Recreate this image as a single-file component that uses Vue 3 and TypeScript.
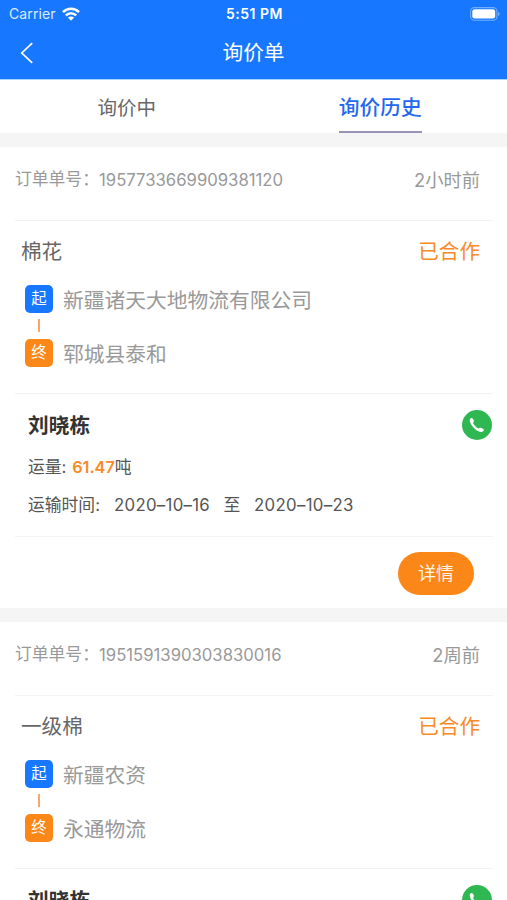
<script setup lang="ts">
interface Inquiry {
  id: string
  ago: string
  goods: string
  status: string
  from: string
  to: string
  contact: string
  amount: string
  start: string
  end: string
}

const inquiries: Inquiry[] = [
  {
    id: '1957733669909381120',
    ago: '2小时前',
    goods: '棉花',
    status: '已合作',
    from: '新疆诸天大地物流有限公司',
    to: '郓城县泰和',
    contact: '刘晓栋',
    amount: '61.47',
    start: '2020–10–16',
    end: '2020–10–23',
  },
  {
    id: '1951591390303830016',
    ago: '2周前',
    goods: '一级棉',
    status: '已合作',
    from: '新疆农资',
    to: '永通物流',
    contact: '刘晓栋',
    amount: '',
    start: '',
    end: '',
  },
]
</script>

<template>
  <div class="screen" lang="zh-CN">
    <header class="top">
      <div class="status-bar">
        <div class="carrier">
          <span>Carrier</span>
          <svg class="wifi" width="18" height="14" viewBox="0 0 18 14">
            <g fill="none" stroke="#fff" stroke-width="2.5">
              <path d="M1 5.2C5.5.7 12.5.7 17 5.2" />
              <path d="M3.8 8.3c3-2.9 7.4-2.9 10.4 0" />
            </g>
            <path d="M9 13.7 5.9 10.6c1.8-1.6 4.4-1.6 6.2 0z" fill="#fff" />
          </svg>
        </div>
        <span class="clock">5:51 PM</span>
        <div class="power">
          <svg width="30" height="14" viewBox="0 0 30 14">
            <rect x=".6" y=".6" width="26.3" height="12.6" rx="3.8" fill="none" stroke="#fff" stroke-opacity=".4" stroke-width="1.1" />
            <rect x="2.3" y="2.2" width="22.9" height="9.4" rx="2.4" fill="#fff" />
            <path d="M28.2 4.8c1.8.8 1.8 3.4 0 4.2z" fill="#fff" fill-opacity=".5" />
          </svg>
        </div>
      </div>
      <div class="nav">
        <svg class="back" width="14" height="22" viewBox="0 0 14 22">
          <path d="M12.2 1.2 1.8 11l10.4 9.8" fill="none" stroke="#fff" stroke-width="1.7" />
        </svg>
        <h1>询价单</h1>
      </div>
    </header>

    <nav class="tabs">
      <div class="tab"><span>询价中</span></div>
      <div class="tab active"><span>询价历史</span></div>
    </nav>

    <article v-for="item in inquiries" :key="item.id" class="card">
      <div class="order">
        <div class="number"><span class="label">订单单号：</span><span class="digits">{{ item.id }}</span></div>
        <span class="ago">{{ item.ago }}</span>
      </div>
      <section class="route">
        <div class="goods">
          <span>{{ item.goods }}</span>
          <span class="state">{{ item.status }}</span>
        </div>
        <div class="stop"><i class="badge">起</i><span>{{ item.from }}</span></div>
        <div class="link"></div>
        <div class="stop"><i class="badge end">终</i><span>{{ item.to }}</span></div>
      </section>
      <section class="contact">
        <div class="person">
          <strong>{{ item.contact }}</strong>
          <svg width="30" height="30" viewBox="0 0 30 30">
            <circle cx="15" cy="15" r="15" fill="#2fb852" />
            <path d="M7.8 9.7c.2-1 1.2-1.9 2.1-1.6.9.3 1.9 1.9 2 2.8.1.9-.8 1.3-.7 2.1.3 1.7 3.3 4.7 5.1 5.4.8.3 1.2-.7 2.2-.6 1 .1 3.2 1 3.4 1.9.2 1-.7 1.9-2 2.2-1.8.4-4.9-.9-7.8-3.7-2.8-2.8-4.7-6.3-4.3-8.5z" fill="#fff" />
          </svg>
        </div>
        <template v-if="item.amount">
          <div class="amount">运量: <b>{{ item.amount }}</b>吨</div>
          <div class="period">
            <span class="period-label">运输时间:</span>
            <span class="date">{{ item.start }}</span>
            <span class="until">至</span>
            <span class="date last">{{ item.end }}</span>
          </div>
        </template>
      </section>
      <div v-if="item.amount" class="actions"><button type="button">详情</button></div>
    </article>
  </div>
</template>

<style>
body {
  background: #f5f5f5;
}
</style>

<style scoped>
.screen {
  height: 900px;
  overflow: hidden;
  background: #f5f5f5;
  color: #666;
  font-family: Inter, 'Noto Sans CJK SC', sans-serif;
  white-space: nowrap;
}
.top {
  box-sizing: border-box;
  height: 80px;
  background: #1877ff;
  border-bottom: 1px solid #a9d4ff;
  color: #fff;
}
.status-bar {
  display: grid;
  grid-template-columns: 1fr auto 1fr;
  align-items: center;
  height: 27px;
  padding: 0 7px 0 9px;
  font-size: 14px;
}
.carrier {
  display: flex;
  align-items: center;
  gap: 6px;
  color: #dcebff;
}
.carrier span {
  font-size: 14px;
  letter-spacing: 0.1px;
}
.clock {
  font-weight: 600;
  font-size: 14px;
  letter-spacing: 0.5px;
}
.power {
  display: flex;
  justify-content: flex-end;
}
.nav {
  display: grid;
  grid-template-columns: 1fr auto 1fr;
  align-items: center;
  height: 51px;
  padding: 0 20px;
}
.nav h1 {
  margin: 0;
  font-size: 20.7px;
  font-weight: 400;
  line-height: 50px;
}
.back {
  margin-top: 1px;
}
.tabs {
  display: grid;
  grid-template-columns: 1fr 1fr;
  height: 53px;
  margin-bottom: 14px;
  background: #fff;
}
.tab {
  display: flex;
  justify-content: center;
  font-size: 19.5px;
}
.tab span {
  box-sizing: border-box;
  height: 53px;
  line-height: 56px;
}
.tab.active {
  color: #2568f0;
  font-size: 20.7px;
  font-weight: 500;
}
.tab.active span {
  border-bottom: 2px solid #9a93b8;
}
.card {
  box-sizing: border-box;
  height: 461px;
  margin-bottom: 14px;
  padding: 0 14px 0 15px;
  background: #fff;
}
.order {
  display: flex;
  justify-content: space-between;
  align-items: center;
  box-sizing: border-box;
  height: 74px;
  padding: 0 13px 9px 0;
  border-bottom: 1px solid #f3f3f3;
  color: #999;
}
.number {
  display: flex;
  align-items: center;
  line-height: 26px;
}
.label {
  width: 84px;
  font-size: 16.8px;
}
.digits {
  padding-top: 1px;
  font-size: 16.7px;
}
.ago {
  padding-top: 1px;
  font-size: 18.3px;
  line-height: 26px;
}
.route {
  box-sizing: border-box;
  height: 173px;
  border-bottom: 1px solid #f3f3f3;
}
.goods {
  display: flex;
  justify-content: space-between;
  height: 64px;
  padding: 0 13px 0 6px;
  font-size: 20.6px;
  line-height: 62px;
}
.state {
  color: #fa8a27;
}
.stop {
  display: flex;
  align-items: center;
  gap: 10px;
  height: 28px;
  padding-left: 10px;
  color: #999;
  font-size: 20.75px;
}
.badge {
  width: 28px;
  height: 28px;
  border-radius: 5px;
  background: #1877ff;
  color: #fff;
  font-size: 15.4px;
  font-style: normal;
  line-height: 27px;
  text-align: center;
}
.badge.end {
  background: #fc8719;
}
.link {
  width: 2px;
  height: 13px;
  margin: 6px 0 7px 23px;
  background: #f9a56b;
}
.contact {
  box-sizing: border-box;
  height: 143px;
  padding: 0 0 0 13px;
  border-bottom: 1px solid #f3f3f3;
  color: #555;
  font-size: 16.8px;
}
.person {
  display: flex;
  justify-content: space-between;
  align-items: center;
  height: 61px;
  padding-right: 1px;
}
.person strong {
  color: #333;
  font-size: 20.7px;
  font-weight: 700;
  padding-bottom: 2px;
}
.amount {
  height: 24px;
  line-height: 24px;
}
.amount b {
  margin-left: 1px;
  color: #fa8a27;
  font-weight: 600;
  font-size: 16.3px;
}
.period {
  display: flex;
  height: 52px;
  line-height: 52px;
}
.period-label {
  width: 86px;
}
.date {
  letter-spacing: 0.3px;
}
.date.last {
  letter-spacing: 0.35px;
}
.until {
  margin: 0 13.5px;
}
.actions {
  display: flex;
  justify-content: flex-end;
  padding: 15px 19px 0 0;
}
.actions button {
  width: 76px;
  height: 43px;
  padding: 0 0 3px;
  border: 0;
  border-radius: 22px;
  background: #fc8719;
  color: #fff4e8;
  font: inherit;
  font-size: 18px;
}
</style>
